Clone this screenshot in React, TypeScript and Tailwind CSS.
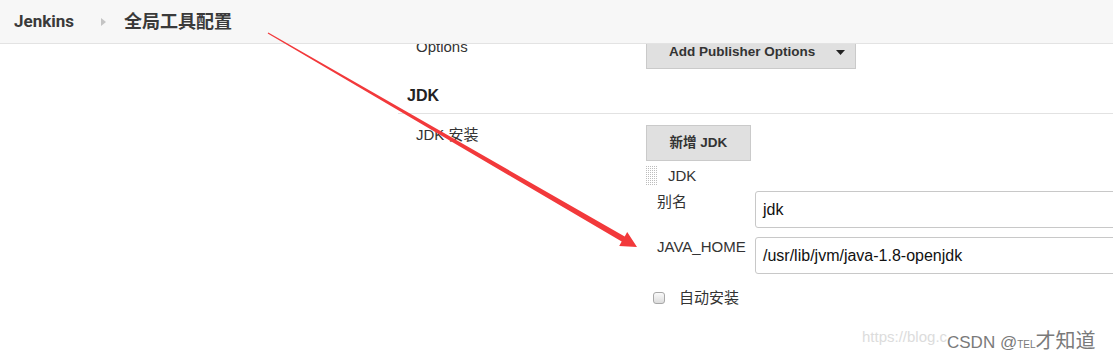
import React from "react";

const body = { fontFamily: '"Liberation Sans", Arial, "Noto Sans CJK SC", sans-serif' };
const head = { fontFamily: 'Roboto, "Noto Sans CJK SC", sans-serif' };

function Handle() {
  return (
    <svg width="12" height="20" viewBox="0 0 12 20">
      {Array.from({ length: 10 }).map((_, r) =>
        Array.from({ length: 6 }).map((__, c) => (
          <rect key={`${r}-${c}`} x={c * 2} y={r * 2} width="1" height="1" fill="#bdbdbd" />
        ))
      )}
    </svg>
  );
}

export default function App() {
  return (
    <div className="relative w-[1113px] h-[356px] overflow-hidden bg-white" style={body}>
      <header
        className="relative z-10 flex items-center h-[44px] bg-[#f7f7f7] border-b border-[#e3e3e3] text-[#3a3a3a]"
        style={head}
      >
        <span className="ml-[14px] text-[17px] font-bold leading-none">Jenkins</span>
        <svg className="ml-[27px]" width="5" height="8" viewBox="0 0 5 8">
          <path d="M0 0 L5 4 L0 8 Z" fill="#c4c4c4" />
        </svg>
        <span className="ml-[18px] text-[18px] font-bold leading-none">全局工具配置</span>
      </header>

      <main className="-mt-[9px] ml-[398px] text-[15px] text-[#333]">
        <div className="flex">
          <div className="w-[248px] shrink-0 pl-[18px] pt-[2px] leading-[20px]">Options</div>
          <button className="w-[210px] shrink-0 h-[34px] flex items-center bg-[#e0e0e0] border border-[#cacaca] text-[13.5px] font-bold text-[#333]">
            <span className="ml-[22px]">Add Publisher Options</span>
            <svg className="ml-auto mr-[10px]" width="9" height="5" viewBox="0 0 9 5">
              <path d="M0 0 L9 0 L4.5 5 Z" fill="#222" />
            </svg>
          </button>
        </div>

        <div className="mt-[17px] h-[28px] pl-[9px] border-b border-[#e2e2e2] text-[16px] font-bold leading-[20px] text-[#222]">
          JDK
        </div>

        <div className="flex mt-[11px]">
          <div className="w-[248px] shrink-0 pl-[18px] leading-[20px]">JDK 安装</div>
          <div className="shrink-0">
            <button className="w-[105px] h-[36px] bg-[#e0e0e0] border border-[#cacaca] text-[13.5px] font-bold text-[#333]">
              新增 JDK
            </button>
            <div className="flex items-center mt-[5px] h-[20px]">
              <Handle />
              <span className="ml-[10px] leading-[20px]">JDK</span>
            </div>
            <div className="flex mt-[5px]">
              <div className="w-[109px] shrink-0 pl-[11px] pt-[1px] leading-[20px]">别名</div>
              <div className="w-[370px] shrink-0 h-[37px] flex items-center pl-[7px] border border-[#c8c8c8] rounded-[3px] text-[16px] text-[#111]">
                jdk
              </div>
            </div>
            <div className="flex mt-[9px]">
              <div className="w-[109px] shrink-0 pl-[11px] leading-[20px]">JAVA_HOME</div>
              <div className="w-[370px] shrink-0 h-[37px] flex items-center pl-[7px] border border-[#c8c8c8] rounded-[3px] text-[16px] text-[#111]">
                /usr/lib/jvm/java-1.8-openjdk
              </div>
            </div>
            <div className="flex items-center mt-[17px] h-[14px]">
              <span className="ml-[7px] w-[12px] h-[12px] rounded-[3px] border border-[#a8a8a8] bg-gradient-to-b from-[#fafafa] to-[#dcdcdc]" />
              <span className="ml-[14px] leading-[20px]">自动安装</span>
            </div>
          </div>
        </div>
      </main>

      <svg className="absolute z-20 left-0 top-0 pointer-events-none" width="1113" height="356">
        <polygon
          points="267.7,33.5 268.3,32.5 624.7,236.4 627.2,232.1 637,247 619.2,245.9 621.7,241.6"
          fill="#f2393b"
        />
      </svg>

      <div className="absolute left-[862px] top-[326px] flex items-center h-[22px] whitespace-nowrap">
        <span className="text-[15px] text-[#dcdcdc]">https://blog.c</span>
      </div>
      <div
        className="absolute left-[947px] top-[325px] flex items-baseline h-[24px] whitespace-nowrap text-[#7a7a7a]"
        style={{ textShadow: "0 0 2px #fff, 0 0 1px #fff" }}
      >
        <span className="text-[17px]" style={{ fontFamily: '"Liberation Sans", Arial, sans-serif' }}>CSDN @</span>
        <span className="text-[10px]">TEL</span>
        <span className="text-[20px]" style={{ fontFamily: '"Noto Sans CJK SC", sans-serif' }}>才知道</span>
      </div>
    </div>
  );
}
